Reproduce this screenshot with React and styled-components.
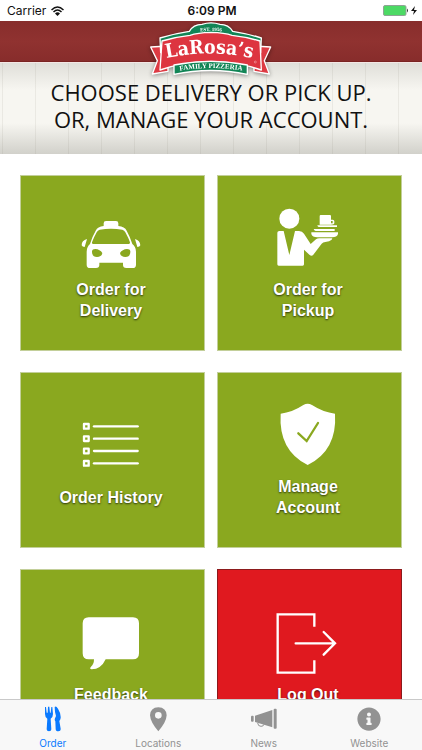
import React from 'react'
import styled, { createGlobalStyle } from 'styled-components'
import { FaInfoCircle } from 'react-icons/fa'

const GlobalStyle = createGlobalStyle`
  * {
    box-sizing: border-box;
  }
  body {
    margin: 0;
    background: #fff;
    font-family: Inter, "Liberation Sans", sans-serif;
  }
`

const Screen = styled.div`
  display: flex;
  flex-direction: column;
  height: 100vh;
  overflow: hidden;
`

const StatusBar = styled.div`
  display: grid;
  grid-template-columns: 1fr auto 1fr;
  align-items: center;
  flex: none;
  height: 21px;
  padding: 0 5px 0 7px;
  font-size: 12px;
  line-height: 20px;
  color: #111;
`

const StatusSide = styled.div`
  display: flex;
  align-items: center;
  justify-content: ${({ $end }) => ($end ? 'flex-end' : 'flex-start')};
  gap: ${({ $end }) => ($end ? 2 : 5)}px;
`

const Clock = styled.time`
  font-weight: 600;
`

const Header = styled.header`
  position: relative;
  flex: none;
  height: 42px;
  background: linear-gradient(#872d2c, #903230 50%, #872c2b);
  border-bottom: 1px solid #f3e6e4;
  box-shadow: inset 0 -1px #7a2322;
`

const LogoSvg = styled.svg`
  position: absolute;
  top: 0;
  left: 50%;
  transform: translateX(-50%);
  filter: drop-shadow(0 1px 2px rgba(0, 0, 0, 0.4));
`

const Banner = styled.section`
  flex: none;
  padding: 16px 12px 21px;
  background:
    repeating-linear-gradient(90deg, transparent 0 2px, rgba(120, 115, 100, 0.1) 2px 3px, transparent 3px 33px),
    linear-gradient(rgba(90, 90, 80, 0.15), transparent 30%, transparent 66%, rgba(90, 90, 80, 0.24)),
    #f7f6f1;
`

const Title = styled.h1`
  margin: 0;
  font: 400 22px/27px "Open Sans", sans-serif;
  text-align: center;
  color: #111;
`

const Tiles = styled.main`
  display: grid;
  grid-template-columns: 1fr 1fr;
  grid-auto-rows: 176px;
  gap: 21px 12px;
  flex: 1;
  min-height: 0;
  padding: 21px 20px;
  overflow: auto;
  scrollbar-width: none;
`

const TileButton = styled.button`
  display: flex;
  flex-direction: column;
  align-items: center;
  justify-content: center;
  gap: 10px;
  padding: 0 3px 0 0;
  border: 1px solid ${({ $danger }) => ($danger ? '#8c1a1c' : '#c3cf9a')};
  background: ${({ $danger }) => ($danger ? '#e0191f' : '#8aa81f')};
  color: #fff;
  font: bold 16px/21px "Liberation Sans", sans-serif;
  text-shadow: 0 1px 2px rgba(0, 0, 0, 0.7);
  cursor: pointer;
`

const TileLabel = styled.span`
  max-width: 110px;
`

const TabBar = styled.nav`
  display: grid;
  grid-template-columns: repeat(4, 1fr);
  flex: none;
  height: 51px;
  border-top: 1px solid #c9c9c9;
  background: #f8f8f8;
`

const Tab = styled.a`
  display: flex;
  flex-direction: column;
  align-items: center;
  gap: 4px;
  padding-top: 6px;
  font-size: 10px;
  line-height: 14px;
  text-decoration: none;
  color: ${({ $active }) => ($active ? '#0a7aff' : '#929292')};
`

const TabIcon = styled.span`
  display: flex;
  align-items: center;
  justify-content: center;
  width: 32px;
  height: 26px;
`

const TileIcon = ({ children }) => (
  <svg width="64" height="64" viewBox="0 0 192 192" fill="#fff" aria-hidden="true">
    {children}
  </svg>
)

const Logo = () => (
  <LogoSvg width="122" height="56" viewBox="30 15 366 168" role="img" aria-label="LaRosa's Family Pizzeria">
    <defs>
      <path id="est" d="M166 48 Q213 42 260 48" />
      <path id="name" d="M66 129 Q208 96 350 129" />
      <path id="family" d="M98 168 Q213 144 328 168" />
    </defs>
    <g stroke="#fff" strokeWidth="4" strokeLinejoin="round">
      <path d="M32 93 L84 90 L84 166 L37 174 L52 134Z" fill="#dd3a43" />
      <path d="M392 93 L342 90 L342 166 L388 174 L373 134Z" fill="#dd3a43" />
      <path d="M60 66 Q106 52 148 46 Q160 25 186 25 Q213 16 240 25 Q266 25 278 46 Q320 52 364 66 L362 110 L62 110Z" fill="#128556" />
      <path d="M66 75 Q110 62 150 58 Q172 50 213 49 Q254 50 276 58 Q318 62 360 75 L364 162 Q290 136 213 136 Q136 136 60 162Z" fill="#dd3540" />
      <path d="M102 147 Q213 125 322 147 L322 175 Q213 152 102 175Z" fill="#128556" />
    </g>
    <g fill="#fff" fontWeight="bold" textAnchor="middle">
      <text fontSize="15" fontFamily="Liberation Serif, serif">
        <textPath href="#est" startOffset="50%">EST. 1956</textPath>
      </text>
      <text fontSize="58" fontFamily="DejaVu Serif Condensed, DejaVu Serif, serif">
        <textPath href="#name" startOffset="50%">LaRosa’s</textPath>
      </text>
      <text fontSize="21" fontFamily="Liberation Serif, serif">
        <textPath href="#family" startOffset="50%">FAMILY PIZZERIA</textPath>
      </text>
    </g>
    <circle cx="346" cy="138" r="3" fill="none" stroke="#fff" />
  </LogoSvg>
)

const tiles = [
  {
    label: 'Order for Delivery',
    icon: (
      <>
        <path d="M74 63 V55 Q74 48 81 48 H111 Q118 48 118 55 V63 Q137 65 143 77 Q153 95 160 117 Q171 126 171 140 V179 Q171 189 161 189 H142 Q132 189 132 180 V173 H61 V180 Q61 189 51 189 H33 Q23 189 23 179 V140 Q23 126 33 117 Q40 94 50 77 Q56 65 74 63Z" />
        <path d="M24 102 Q8 106 8 121 Q10 126 17 126Z M168 102 Q183 106 184 121 Q182 126 175 126Z" />
        <path d="M62 74 Q96 68 130 74 Q136 76 139 82 Q149 100 153 112 Q154 117 149 117 H43 Q37 117 39 112 Q44 98 53 82 Q56 76 62 74Z" fill="#8aa81f" />
        <path d="M39 139 Q40 132 49 132 Q63 133 70 144 Q69 155 54 156 Q38 156 39 139Z M154 139 Q153 132 144 132 Q130 133 123 144 Q124 155 139 156 Q155 156 154 139Z" fill="#8aa81f" />
      </>
    ),
  },
  {
    label: 'Order for Pickup',
    icon: (
      <>
        <circle cx="40" cy="41" r="30" />
        <path d="M23 78 L40 150 L57 78 H69 Q79 78 84 86 L104 117 L120 103 Q124 100 130 100 H169 L167 104 Q161 110 148 111 Q141 111 137 116 L112 149 Q107 155 101 150 L84 134 V178 Q84 182 80 182 H8 Q4 182 4 178 V83 Q4 78 10 78Z" />
        <path d="M106 82 H186 V87 Q183 97 168 97 H124 Q109 97 106 87Z M113 72 H176 V78 H119 Q114 77 113 72Z M124 61 H183 V66 H128 Q124 65 124 61Z" />
        <path d="M134 30 H162 Q165 30 165 34 V44 H170 Q175 44 175 49 V54 Q175 59 165 59 H131 V34 Q131 30 134 30Z" />
        <path d="M165 48 H170 V55 H165Z" fill="#8aa81f" />
      </>
    ),
  },
  {
    label: 'Order History',
    icon: [40, 77, 114, 151].map((y) => (
      <g key={y} fill="none" stroke="#fff" strokeWidth="7" strokeLinecap="round" strokeLinejoin="round">
        <rect x="15" y={y - 7} width="14" height="14" />
        <path d={`M45 ${y} H176`} />
      </g>
    )),
  },
  {
    label: 'Manage Account',
    icon: (
      <>
        <path d="M82 9 Q95 1 108 9 Q142 31 177 35 Q184 145 95 189 Q7 145 14 35 Q49 31 82 9Z" />
        <path d="M67 94 L92 117 L126 63" fill="none" stroke="#8aa81f" strokeWidth="7" strokeLinecap="round" />
      </>
    ),
  },
  {
    label: 'Feedback',
    icon: (
      <path d="M29 22 H162 Q180 22 180 40 V130 Q180 148 162 148 H80 Q66 178 38 178 Q30 176 36 170 Q45 163 45 148 H29 Q11 148 11 130 V40 Q11 22 29 22Z" />
    ),
  },
  {
    label: 'Log Out',
    danger: true,
    icon: (
      <g fill="none" stroke="#fff" strokeWidth="7" strokeLinejoin="miter">
        <path d="M115 50 V13 H5 V188 H115 V151" />
        <path d="M59 100 H177 M143 66 L177 100 L143 134" strokeLinecap="round" />
      </g>
    ),
  },
]

const tabs = [
  {
    label: 'Order',
    active: true,
    icon: (
      <svg width="32" height="26" viewBox="0 0 96 78" fill="currentColor">
        <path d="M24 3 H27 L29 20 H32 L33 2 H37 L39 20 H41 L43 3 H46 L48 24 Q48 34 41 38 L43 70 Q43 76 36 76 Q29 76 29 70 L31 38 Q24 34 24 24Z" />
        <path d="M53 3 Q57 -1 63 8 Q72 22 71 36 Q70 42 67 45 L71 68 Q72 76 64 76 Q56 76 56 69 L55 46 Q52 43 54 37 L57 30 Q53 18 53 3Z" />
      </svg>
    ),
  },
  {
    label: 'Locations',
    icon: (
      <svg width="32" height="26" viewBox="0 0 96 78" fill="currentColor">
        <path fillRule="evenodd" d="M49 4 Q73 5 74 28 Q73 48 49 76 Q25 48 24 28 Q25 5 49 4Z M49 18 A10 10 0 1 0 49 38 A10 10 0 1 0 49 18Z" />
      </svg>
    ),
  },
  {
    label: 'News',
    icon: (
      <svg width="32" height="26" viewBox="0 0 96 78" fill="currentColor">
        <rect x="9" y="29" width="8" height="18" rx="3" />
        <path d="M21 29 L73 12 V64 L21 48Z" />
        <rect x="77" y="8" width="9" height="60" rx="3" />
        <path d="M29 51 Q30 61 39 61 Q47 61 48 55" fill="none" stroke="currentColor" strokeWidth="3" />
      </svg>
    ),
  },
  { label: 'Website', icon: <FaInfoCircle size={24} /> },
]

const App = () => (
  <Screen>
    <GlobalStyle />
    <StatusBar>
      <StatusSide>
        <span>Carrier</span>
        <svg width="13" height="10" viewBox="0 0 26 20" fill="none" stroke="#111" strokeWidth="3">
          <path d="M1 8 Q13 -4 25 8 M5 12 Q13 4 21 12" />
          <path d="M8 15 Q13 10 18 15 L13 20Z" fill="#111" stroke="none" />
        </svg>
      </StatusSide>
      <Clock>6:09 PM</Clock>
      <StatusSide $end>
        <svg width="26" height="11" viewBox="0 0 52 22">
          <rect x="1" y="1" width="45" height="20" rx="3" fill="#4cd964" stroke="#8fa394" strokeWidth="2" />
          <path d="M48 7 Q52 11 48 15Z" fill="#333" />
        </svg>
        <svg width="6" height="9" viewBox="0 0 6 9" fill="#111">
          <path d="M4 0 L0 5 H3 L2 9 L6 4 H3Z" />
        </svg>
      </StatusSide>
    </StatusBar>

    <Header>
      <Logo />
    </Header>

    <Banner>
      <Title>
        CHOOSE DELIVERY OR PICK UP.
        <br />
        OR, MANAGE YOUR ACCOUNT.
      </Title>
    </Banner>

    <Tiles>
      {tiles.map(({ label, icon, danger }) => (
        <TileButton key={label} type="button" $danger={danger}>
          <TileIcon>{icon}</TileIcon>
          <TileLabel>{label}</TileLabel>
        </TileButton>
      ))}
    </Tiles>

    <TabBar>
      {tabs.map(({ label, icon, active }) => (
        <Tab key={label} href={`#${label.toLowerCase()}`} $active={active}>
          <TabIcon>{icon}</TabIcon>
          {label}
        </Tab>
      ))}
    </TabBar>
  </Screen>
)

export default App
